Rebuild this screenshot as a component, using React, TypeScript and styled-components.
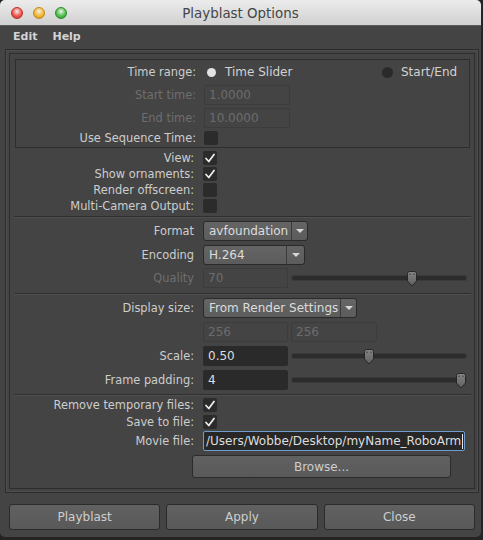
import React from 'react';
import styled, { createGlobalStyle } from 'styled-components';

const GlobalStyle = createGlobalStyle`
  html, body {
    margin: 0;
    padding: 0;
    background: #242424;
  }
  body {
    font-family: "DejaVu Sans", "Liberation Sans", sans-serif;
    font-size: 11.4px;
    color: #cdcdcd;
  }
`;

const Window = styled.div`
  width: 481px;
  background: #444444;
  border-radius: 5px 5px 5px 5px;
  overflow: hidden;
`;

const TitleBar = styled.div`
  height: 25px;
  display: grid;
  grid-template-columns: 1fr auto 1fr;
  align-items: center;
  background: linear-gradient(#ececec, #d0d0d0);
  border-bottom: 1px solid #5a5a5a;
`;

const Lights = styled.div`
  display: flex;
  gap: 10px;
  padding-left: 11px;
`;

const Light = styled.span<{ $c: string; $d: string }>`
  width: 12px;
  height: 12px;
  border-radius: 50%;
  box-sizing: border-box;
  border: 1px solid ${(p) => p.$d};
  background: radial-gradient(circle at 50% 35%, #fff8 0, ${(p) => p.$c} 55%, ${(p) => p.$d} 100%);
`;

const Title = styled.div`
  font-size: 13.4px;
  color: #454545;
  padding-top: 1px;
`;

const MenuBar = styled.div`
  height: 21px;
  display: flex;
  align-items: center;
  gap: 15px;
  padding-left: 13px;
  font-weight: bold;
  font-size: 11px;
  color: #d4d4d4;
`;

const Body = styled.div`
  padding: 2px 2px 7px 5px;
`;

const OuterFrame = styled.div`
  border: 1px solid #2c2c2c;
  box-shadow: inset 0 0 0 1px #4e4e4e;
  padding: 3px;
`;

const InnerFrame = styled.div`
  border: 1px solid #2e2e2e;
  padding: 5px 3px 10px 4px;
  --label: 180px;
  --gap: 9px;
`;

const TimeGroup = styled.div`
  margin: 0 1px;
  border: 1px solid #2e2e2e;
  padding: 1px 0 1px;
  --gap: 8px;
`;

const Section = styled.div<{ $pt: number; $pb: number }>`
  padding-top: ${(p) => p.$pt}px;
  padding-bottom: ${(p) => p.$pb}px;
`;

const Separator = styled.div`
  border-top: 1px solid #2f2f2f;
  border-bottom: 1px solid #4f4f4f;
`;

const Row = styled.div<{ $h: number }>`
  height: ${(p) => p.$h}px;
  display: grid;
  grid-template-columns: var(--label) 1fr;
  column-gap: var(--gap);
  align-items: center;
`;

const Label = styled.div<{ $dim?: boolean }>`
  text-align: right;
  white-space: nowrap;
  color: ${(p) => (p.$dim ? '#6e6e6e' : '#cdcdcd')};
`;

const Controls = styled.div`
  display: flex;
  align-items: center;
  gap: 3px;
`;

const Field = styled.div<{ $w: number; $tone?: 'dim' | 'dark' }>`
  width: ${(p) => p.$w}px;
  height: 20px;
  box-sizing: border-box;
  flex: none;
  display: flex;
  align-items: center;
  padding-left: 4px;
  border-radius: 2px;
  white-space: nowrap;
  overflow: hidden;
  font-size: 12px;
  background: ${(p) => (p.$tone === 'dark' ? '#2a2a2a' : '#444444')};
  border: 1px solid ${(p) => (p.$tone === 'dark' ? '#2a2a2a' : '#3c3c3c')};
  color: ${(p) => (p.$tone === 'dark' ? '#dedede' : '#6c6c6c')};
`;

const MovieField = styled(Field)`
  border: 1px solid #6f9ccb;
  background: #272727;
  padding-left: 2px;
`;

const Caret = styled.span`
  width: 1px;
  height: 15px;
  margin-left: 1px;
  background: #e6e6e6;
`;

const Dropdown = styled.div<{ $w: number; $arrow: number }>`
  width: ${(p) => p.$w}px;
  height: 20px;
  box-sizing: border-box;
  display: grid;
  grid-template-columns: 1fr ${(p) => p.$arrow}px;
  background: linear-gradient(#656565, #5c5c5c);
  border: 1px solid #2a2a2a;
  border-radius: 3px;
  color: #dcdcdc;
  font-size: 12px;
`;

const DropText = styled.span`
  display: flex;
  align-items: center;
  padding-left: 5px;
  white-space: nowrap;
`;

const DropArrow = styled.span`
  border-left: 1px solid #3a3a3a;
  display: flex;
  align-items: center;
  justify-content: center;
  &::after {
    content: '';
    border-left: 4px solid transparent;
    border-right: 4px solid transparent;
    border-top: 4px solid #d8d8d8;
  }
`;

const CheckBox = styled.span`
  width: 14px;
  height: 14px;
  border-radius: 2px;
  background: #2b2b2b;
  display: flex;
  align-items: center;
  justify-content: center;
`;

const RadioGroup = styled.div`
  display: grid;
  grid-template-columns: 178px auto;
  align-items: center;
  font-size: 12px;
`;

const RadioOption = styled.div`
  display: flex;
  align-items: center;
  gap: 8px;
  color: #d2d2d2;
`;

const RadioDot = styled.span<{ $on?: boolean }>`
  width: ${(p) => (p.$on ? 9 : 11)}px;
  height: ${(p) => (p.$on ? 9 : 11)}px;
  margin-left: ${(p) => (p.$on ? 3 : 0)}px;
  margin-right: ${(p) => (p.$on ? 1 : 0)}px;
  border-radius: 50%;
  background: ${(p) => (p.$on ? '#e2e2e2' : '#2a2a2a')};
`;

const SliderBox = styled.div`
  position: relative;
  flex: 1;
  height: 20px;
  margin: 0 5px 0 1px;
  display: flex;
  align-items: center;
`;

const Track = styled.div`
  flex: 1;
  height: 4px;
  border-radius: 2px;
  background: #2c2c2c;
  box-shadow: 0 0 0 1px #3a3a3a;
`;

const Handle = styled.svg`
  position: absolute;
  top: 3px;
  width: 12px;
  height: 16px;
  transform: translateX(-50%);
`;

const BrowseRow = styled.div`
  margin-top: 3px;
  padding-left: 178px;
`;

const Button = styled.div<{ $w?: number }>`
  ${(p) => (p.$w ? `width: ${p.$w}px;` : '')}
  height: 23px;
  box-sizing: border-box;
  display: flex;
  align-items: center;
  justify-content: center;
  background: linear-gradient(#616161, #595959);
  border: 1px solid #2b2b2b;
  border-radius: 3px;
  color: #cdcdcd;
  font-size: 12px;
`;

const ButtonBar = styled.div`
  margin-top: 11px;
  padding: 0 4px;
  display: grid;
  grid-template-columns: 1fr 1fr 1fr;
  gap: 6px;
  & > div {
    height: 26px;
  }
`;

const Check = () => (
  <CheckBox>
    <svg width="12" height="12" viewBox="0 0 12 12">
      <path d="M2 6.5 L4.8 9.5 L10 2.5" fill="none" stroke="#ececec" strokeWidth="1.8" strokeLinecap="round" strokeLinejoin="round" />
    </svg>
  </CheckBox>
);

const Slider = ({ value }: { value: number }) => (
  <SliderBox>
    <Track />
    <Handle viewBox="0 0 12 16" style={{ left: `${value * 100}%` }}>
      <defs>
        <linearGradient id="hg" x1="0" y1="0" x2="0" y2="1">
          <stop offset="0" stopColor="#858585" />
          <stop offset="1" stopColor="#5f5f5f" />
        </linearGradient>
      </defs>
      <path d="M1.5 2.5 Q1.5 0.5 3.5 0.5 H8.5 Q10.5 0.5 10.5 2.5 V10 L6 15 L1.5 10 Z" fill="url(#hg)" stroke="#262626" />
      <rect x="3.5" y="2.5" width="1" height="1.5" fill="#333" />
      <rect x="7.5" y="2.5" width="1" height="1.5" fill="#333" />
    </Handle>
  </SliderBox>
);

export default function App() {
  return (
    <>
      <GlobalStyle />
      <Window>
        <TitleBar>
          <Lights>
            <Light $c="#f0564f" $d="#b9302a" />
            <Light $c="#f4b832" $d="#c38a17" />
            <Light $c="#4fc14a" $d="#2b8b2a" />
          </Lights>
          <Title>Playblast Options</Title>
          <div />
        </TitleBar>
        <MenuBar>
          <span>Edit</span>
          <span>Help</span>
        </MenuBar>
        <Body>
          <OuterFrame>
            <InnerFrame>
              <TimeGroup>
                <Row $h={22}>
                  <Label>Time range:</Label>
                  <RadioGroup>
                    <RadioOption>
                      <RadioDot $on />
                      Time Slider
                    </RadioOption>
                    <RadioOption>
                      <RadioDot />
                      Start/End
                    </RadioOption>
                  </RadioGroup>
                </Row>
                <Row $h={23}>
                  <Label $dim>Start time:</Label>
                  <Field $w={86}>1.0000</Field>
                </Row>
                <Row $h={23}>
                  <Label $dim>End time:</Label>
                  <Field $w={86}>10.0000</Field>
                </Row>
                <Row $h={17}>
                  <Label>Use Sequence Time:</Label>
                  <CheckBox />
                </Row>
              </TimeGroup>

              <Section $pt={2} $pb={2}>
                <Row $h={16}>
                  <Label>View:</Label>
                  <Check />
                </Row>
                <Row $h={16}>
                  <Label>Show ornaments:</Label>
                  <Check />
                </Row>
                <Row $h={16}>
                  <Label>Render offscreen:</Label>
                  <CheckBox />
                </Row>
                <Row $h={16}>
                  <Label>Multi-Camera Output:</Label>
                  <CheckBox />
                </Row>
              </Section>
              <Separator />

              <Section $pt={1} $pb={3}>
                <Row $h={24}>
                  <Label>Format</Label>
                  <Dropdown $w={105} $arrow={16}>
                    <DropText>avfoundation</DropText>
                    <DropArrow />
                  </Dropdown>
                </Row>
                <Row $h={23}>
                  <Label>Encoding</Label>
                  <Dropdown $w={102} $arrow={18}>
                    <DropText>H.264</DropText>
                    <DropArrow />
                  </Dropdown>
                </Row>
                <Row $h={24}>
                  <Label $dim>Quality</Label>
                  <Controls>
                    <Field $w={85}>70</Field>
                    <Slider value={0.69} />
                  </Controls>
                </Row>
              </Section>
              <Separator />

              <Section $pt={1} $pb={2}>
                <Row $h={24}>
                  <Label>Display size:</Label>
                  <Dropdown $w={154} $arrow={16}>
                    <DropText>From Render Settings</DropText>
                    <DropArrow />
                  </Dropdown>
                </Row>
                <Row $h={24}>
                  <span />
                  <Controls>
                    <Field $w={85}>256</Field>
                    <Field $w={86}>256</Field>
                  </Controls>
                </Row>
                <Row $h={24}>
                  <Label>Scale:</Label>
                  <Controls>
                    <Field $w={85} $tone="dark">0.50</Field>
                    <Slider value={0.44} />
                  </Controls>
                </Row>
                <Row $h={24}>
                  <Label>Frame padding:</Label>
                  <Controls>
                    <Field $w={85} $tone="dark">4</Field>
                    <Slider value={0.97} />
                  </Controls>
                </Row>
              </Section>
              <Separator />

              <Section $pt={1} $pb={0}>
                <Row $h={16}>
                  <Label>Remove temporary files:</Label>
                  <Check />
                </Row>
                <Row $h={17}>
                  <Label>Save to file:</Label>
                  <Check />
                </Row>
                <Row $h={22}>
                  <Label>Movie file:</Label>
                  <MovieField $w={262} $tone="dark">
                    /Users/Wobbe/Desktop/myName_RoboArm
                    <Caret />
                  </MovieField>
                </Row>
                <BrowseRow>
                  <Button $w={259}>Browse...</Button>
                </BrowseRow>
              </Section>
            </InnerFrame>
          </OuterFrame>
          <ButtonBar>
            <Button>Playblast</Button>
            <Button>Apply</Button>
            <Button>Close</Button>
          </ButtonBar>
        </Body>
      </Window>
    </>
  );
}
